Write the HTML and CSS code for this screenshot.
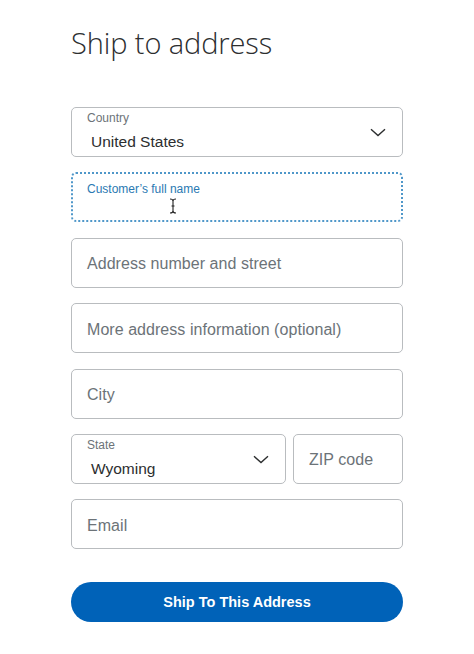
FILE: index.html
```html
<!DOCTYPE html>
<html lang="en">
<head>
<meta charset="utf-8">
<title>Ship to address</title>
<link rel="stylesheet" href="styles.css">
</head>
<body>
<main class="page">
  <h1 class="title">Ship to address</h1>
  <form class="form">
    <div class="field labeled">
      <span class="label">Country</span>
      <span class="value">United States</span>
      <svg class="chev" width="16" height="9" viewBox="0 0 16 9"><path d="M1 1.2 L8 7.6 L15 1.2" fill="none" stroke="#2c2e2f" stroke-width="1.4"/></svg>
    </div>
    <div class="field labeled focused">
      <span class="label blue">Customer’s full name</span>
      <svg class="ibeam" width="8" height="16" viewBox="0 0 8 16"><path d="M1 1 Q4 1 4 3 Q4 1 7 1 M4 3 V13 M1 15 Q4 15 4 13 Q4 15 7 15 M2.5 8 H5.5" fill="none" stroke="#222" stroke-width="1.1"/></svg>
    </div>
    <div class="field"><span class="ph">Address number and street</span></div>
    <div class="field"><span class="ph">More address information (optional)</span></div>
    <div class="field"><span class="ph">City</span></div>
    <div class="row">
      <div class="field labeled state">
        <span class="label">State</span>
        <span class="value">Wyoming</span>
        <svg class="chev" width="16" height="9" viewBox="0 0 16 9"><path d="M1 1.2 L8 7.6 L15 1.2" fill="none" stroke="#2c2e2f" stroke-width="1.4"/></svg>
      </div>
      <div class="field zip"><span class="ph">ZIP code</span></div>
    </div>
    <div class="field"><span class="ph">Email</span></div>
    <button type="button" class="btn">Ship To This Address</button>
  </form>
</main>
</body>
</html>
```

FILE: styles.css
```css
html, body {
  margin: 0;
  padding: 0;
  background: #ffffff;
}
.page {
  width: 332px;
  padding: 26px 0 0 71px;
  font-family: "Liberation Sans", Arial, sans-serif;
  color: #2c2e2f;
}
.title {
  margin: 0 0 47px 0;
  font-family: "Open Sans", "Liberation Sans", sans-serif;
  font-weight: 300;
  font-size: 29px;
  line-height: 34px;
  color: #2c2e2f;
  letter-spacing: -0.1px;
}
.form {
  display: flex;
  flex-direction: column;
  gap: 15.4px;
}
.field {
  position: relative;
  box-sizing: border-box;
  height: 50px;
  border: 1px solid #b9bcbf;
  border-radius: 5px;
  display: flex;
  flex-direction: column;
  justify-content: center;
  padding: 3px 15px 0 15px;
}
.ph {
  font-size: 16px;
  letter-spacing: 0.05px;
  line-height: 20px;
  color: #6c7378;
}
.labeled {
  justify-content: flex-start;
  padding-top: 3px;
}
.label {
  font-size: 12px;
  line-height: 14px;
  color: #6c7378;
}
.value {
  margin-top: 7px;
  padding-left: 4px;
  font-size: 15.5px;
  line-height: 20px;
  color: #2c2e2f;
}
.chev {
  position: absolute;
  right: 16px;
  top: 20px;
}
.focused {
  border: 2px dotted #4f97c9;
  padding-top: 8px;
  padding-left: 14px;
}
.blue {
  color: #2a79b2;
  font-size: 12px;
  line-height: 15px;
}
.ibeam {
  position: absolute;
  left: 96px;
  top: 24px;
}
.row {
  display: flex;
  gap: 7px;
}
.state {
  width: 215px;
}
.zip {
  flex: 1;
}
.btn {
  margin-top: 17px;
  height: 40px;
  padding-top: 2px;
  border: none;
  border-radius: 20px;
  background: #0062b8;
  color: #ffffff;
  font-family: "Liberation Sans", Arial, sans-serif;
  font-weight: 700;
  font-size: 14.5px;
  cursor: pointer;
}
```
